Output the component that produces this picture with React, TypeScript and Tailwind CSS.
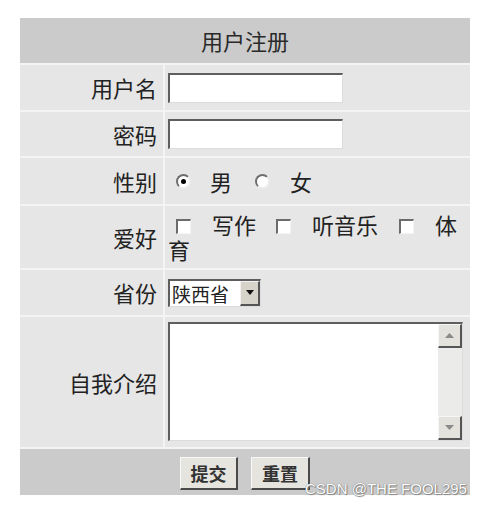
import React from "react";

const cjk = { fontFamily: '"Noto Sans CJK SC", "Noto Sans", sans-serif' };

function Checkbox() {
  return (
    <span className="inline-block w-[15px] h-[15px] bg-white border-t-2 border-l-2 border-t-[#6b6b6b] border-l-[#6b6b6b] border-b border-r border-b-[#f4f4f4] border-r-[#f4f4f4] align-[0px]" />
  );
}

function Radio({ checked }: { checked?: boolean }) {
  return (
    <span className="inline-flex items-center justify-center w-[15px] h-[15px] rounded-full bg-white border-2 border-t-[#6e6e6e] border-l-[#6e6e6e] border-b-[#ececec] border-r-[#ececec]">
      {checked && <span className="block w-[5px] h-[5px] rounded-full bg-black" />}
    </span>
  );
}

function Label({ children }: { children: React.ReactNode }) {
  return (
    <div className="bg-[#e6e6e6] flex items-center justify-end pr-[6px] text-[22px] text-[#222]">
      {children}
    </div>
  );
}

function TextInput() {
  return (
    <div className="w-[175px] h-[30px] bg-white border-t-2 border-l-2 border-t-[#5e5e5e] border-l-[#5e5e5e] border-b border-r border-b-[#dcdcdc] border-r-[#dcdcdc]" />
  );
}

export default function App() {
  return (
    <div className="w-[488px] h-[506px] bg-white relative" style={cjk}>
      <div className="absolute left-[20px] top-[18px] w-[450px] grid grid-cols-[143px_305px] grid-rows-[45px_45px_44px_46px_62px_45px_130px_46px] gap-[2px] bg-[#f4f4f4]">
        <div className="col-span-2 bg-[#cbcbcb] flex items-center justify-center text-[22px] text-[#2a2a2a]">
          用户注册
        </div>

        <Label>用户名</Label>
        <div className="bg-[#e6e6e6] flex items-center pl-[3px]">
          <TextInput />
        </div>

        <Label>密码</Label>
        <div className="bg-[#e6e6e6] flex items-center pl-[3px]">
          <TextInput />
        </div>

        <Label>性别</Label>
        <div className="bg-[#e6e6e6] flex items-center pl-[11px] text-[22px] text-[#222]">
          <Radio checked />
          <span className="ml-[19px]">男</span>
          <span className="ml-[23px] flex"><Radio /></span>
          <span className="ml-[20px]">女</span>
        </div>

        <Label>爱好</Label>
        <div className="bg-[#e6e6e6] flex items-center pl-[3px] text-[22px] text-[#222]">
          <div className="leading-[25px] w-[302px] break-all">
            <span className="ml-[8px]"><Checkbox /></span>
            <span className="ml-[21px]">写作</span>
            <span className="ml-[20px]"><Checkbox /></span>
            <span className="ml-[21px]">听音乐</span>
            <span className="ml-[21px]"><Checkbox /></span>
            <span className="ml-[21px]">体育</span>
          </div>
        </div>

        <Label>省份</Label>
        <div className="bg-[#e6e6e6] flex items-center pl-[3px]">
          <div className="w-[93px] h-[28px] flex bg-white border-t-2 border-l-2 border-t-[#5e5e5e] border-l-[#5e5e5e] border-b border-r border-b-[#dcdcdc] border-r-[#dcdcdc]">
            <div className="flex-1 flex items-center pl-[2px] text-[19px] text-[#222] leading-none whitespace-nowrap overflow-hidden">陕西省</div>
            <div className="w-[20px] h-full bg-[#d6d3cb] flex items-center justify-center border-t border-l border-t-[#f2f2f2] border-l-[#f2f2f2] border-b-2 border-r-2 border-b-[#555] border-r-[#555]">
              <svg width="8" height="5" viewBox="0 0 8 5"><path d="M0 0 L8 0 L4 5 Z" fill="#111" /></svg>
            </div>
          </div>
        </div>

        <Label>自我介绍</Label>
        <div className="bg-[#e6e6e6] pl-[3px] pt-[5px]">
          <div className="w-[295px] h-[119px] flex bg-white border-t-2 border-l-2 border-t-[#5e5e5e] border-l-[#5e5e5e] border-b border-r border-b-[#dcdcdc] border-r-[#dcdcdc]">
            <div className="flex-1" />
            <div className="w-[24px] h-full bg-[#ebebea] flex flex-col justify-between">
              <div className="h-[24px] bg-[#e4e2dc] flex items-center justify-center border-t border-l border-t-[#f6f6f6] border-l-[#f6f6f6] border-b-2 border-r-2 border-b-[#555] border-r-[#555]">
                <svg width="9" height="5" viewBox="0 0 9 5"><path d="M0 5 L9 5 L4.5 0 Z" fill="#8a8a8a" /></svg>
              </div>
              <div className="h-[24px] bg-[#e4e2dc] flex items-center justify-center border-t border-l border-t-[#f6f6f6] border-l-[#f6f6f6] border-b-2 border-r-2 border-b-[#555] border-r-[#555]">
                <svg width="9" height="5" viewBox="0 0 9 5"><path d="M0 0 L9 0 L4.5 5 Z" fill="#8a8a8a" /></svg>
              </div>
            </div>
          </div>
        </div>

        <div className="col-span-2 bg-[#cbcbcb] flex items-center justify-center gap-[13px] pt-[3px]">
          <button className="w-[58px] h-[33px] bg-[#e6e4de] text-[18px] font-bold text-[#333] leading-none border-t border-l border-t-[#f8f8f8] border-l-[#f8f8f8] border-b-2 border-r-2 border-b-[#4a4a4a] border-r-[#4a4a4a]" style={cjk}>
            提交
          </button>
          <button className="w-[59px] h-[33px] bg-[#e6e4de] text-[18px] font-bold text-[#333] leading-none border-t border-l border-t-[#f8f8f8] border-l-[#f8f8f8] border-b-2 border-r-2 border-b-[#4a4a4a] border-r-[#4a4a4a]" style={cjk}>
            重置
          </button>
        </div>
      </div>

      <div
        className="absolute left-[305px] top-[481px] text-[15px] text-white leading-none whitespace-nowrap"
        style={{ fontFamily: '"Liberation Sans", Arial, sans-serif', textShadow: "0 0 1px #555, 1px 1px 1px #888" }}
      >
        CSDN @THE FOOL295
      </div>
    </div>
  );
}
